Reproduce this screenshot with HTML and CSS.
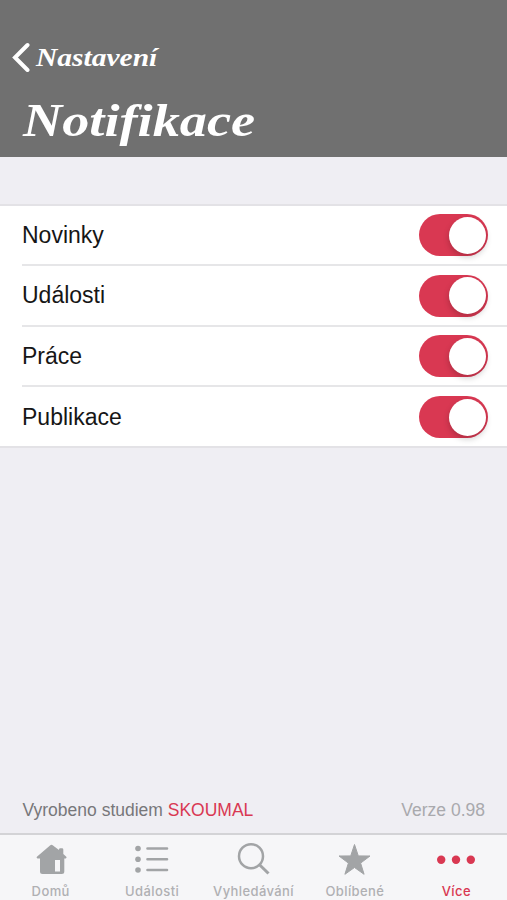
FILE: index.html
```html
<!DOCTYPE html>
<html lang="cs">
<head>
  <meta charset="UTF-8">
  <title>Notifikace</title>
  <meta name="viewport" content="width=device-width, initial-scale=1">
  <link rel="stylesheet" href="styles.css">
</head>
<body>
  <header class="header">
    <a class="back">
      <svg width="18" height="30" viewBox="0 0 18 30"><path d="M15.500 3L3 15.500l12.500 12.500" fill="none" stroke="#fff" stroke-width="4" stroke-linecap="round"/></svg>
      <span class="back-label">Nastavení</span>
    </a>
    <h1><span class="title">Notifikace</span></h1>
  </header>

  <main>
    <div class="list">
      <label class="row"><span>Novinky</span><input type="checkbox" class="switch" checked></label>
      <label class="row"><span>Události</span><input type="checkbox" class="switch" checked></label>
      <label class="row"><span>Práce</span><input type="checkbox" class="switch" checked></label>
      <label class="row"><span>Publikace</span><input type="checkbox" class="switch" checked></label>
    </div>
    <div class="info">
      <span>Vyrobeno studiem <a class="studio">SKOUMAL</a></span>
      <span class="version">Verze 0.98</span>
    </div>
  </main>

  <nav class="tabs">
    <a class="tab">
      <svg width="40" height="36" viewBox="0 0 40 36"><path fill-rule="evenodd" d="M19 4.500q1.500-1.300 3 0L28 9V8.500q0-1.300 1.300-1.300h1.700q1.300 0 1.300 1.300V13l3 2.800q.8 1.300-.5 1.700h-1.500V30.500q0 2.500-2.500 2.500H11.500Q9 33 9 30.500V17.500H6.500q-1.500-.4-.6-1.700zM24 19V30.500H29V19z"/></svg>
      <span>Domů</span>
    </a>
    <a class="tab">
      <svg width="40" height="36" viewBox="0 0 40 36"><circle cx="6" cy="7.500" r="2.800"/><circle cx="6" cy="18.300" r="2.800"/><circle cx="6" cy="29" r="2.800"/><path class="line" stroke-width="2.600" stroke-linecap="round" d="M15.500 7.500h19.500M15.500 18.300h19.500M15.500 29h19.500"/></svg>
      <span>Události</span>
    </a>
    <a class="tab">
      <svg width="40" height="36" viewBox="0 0 40 36"><circle class="line" cx="17" cy="15.200" r="12" stroke-width="2.500"/><path class="line" stroke-width="3" d="M25.500 23.700L34.500 32.500"/></svg>
      <span>Vyhledávání</span>
    </a>
    <a class="tab">
      <svg width="40" height="36" viewBox="0 0 40 36"><path stroke="#a2a4a6" stroke-linejoin="round" d="M19.500 3.500l3.800 11.400 11.700.1-9.400 7.100 3.500 11.200-9.600-6.800-9.600 6.800 3.500-11.200L4 15l11.700-.1z"/></svg>
      <span>Oblíbené</span>
    </a>
    <a class="tab active">
      <svg width="40" height="36" viewBox="0 0 40 36"><circle cx="5.200" cy="18.800" r="4.200"/><circle cx="20" cy="18.800" r="4.200"/><circle cx="34.800" cy="18.800" r="4.200"/></svg>
      <span>Více</span>
    </a>
  </nav>
</body>
</html>
```
FILE: styles.css
```css
* {
  box-sizing: border-box;
}
body {
  margin: 0;
  height: 900px;
  display: flex;
  flex-direction: column;
  overflow: hidden;
  background: #efeef3;
  color: #161616;
  font-family: "Liberation Sans", Arial, sans-serif;
}
.header {
  height: 157px;
  padding: 42px 12px 0;
  background: #707070;
  color: #fff;
  font-family: Georgia, "Liberation Serif", serif;
  font-weight: bold;
  font-style: italic;
}
.back {
  display: flex;
  align-items: center;
  gap: 6px;
  height: 30px;
  font-size: 25px;
}
.back-label,
.title {
  display: inline-block;
  transform: scaleX(1.18);
  transform-origin: left;
}
.back-label {
  padding-top: 2px;
}
h1 {
  margin: 23px 0 0 11px;
  font-size: 46px;
  line-height: 52px;
}
main {
  flex: 1;
  display: flex;
  flex-direction: column;
  justify-content: space-between;
  padding-top: 47px;
}
.list {
  background: #fff;
  border-top: 2px solid #e3e2e6;
  border-bottom: 2px solid #e3e2e6;
  padding-left: 22px;
}
.row {
  display: flex;
  align-items: center;
  justify-content: space-between;
  height: 60.500px;
  padding: 1px 19px 0 0;
  border-bottom: 2px solid #e6e6e8;
  font-size: 23px;
}
.row:first-child {
  height: 60px;
  padding-top: 0;
}
.row:last-child {
  border-bottom: 0;
  height: 59px;
}
.switch {
  appearance: none;
  width: 69px;
  height: 42px;
  margin: 0;
  padding: 2.500px;
  border-radius: 21px;
  background: #d93852;
}
.switch::before {
  content: "";
  display: block;
  width: 37px;
  height: 37px;
  margin-left: auto;
  border-radius: 50%;
  background: #fff;
  box-shadow: 0 3px 6px rgba(0, 0, 0, .2);
}
.info {
  display: flex;
  justify-content: space-between;
  padding: 0 22px 12px 22.500px;
  font-size: 17.500px;
  line-height: 21px;
  color: #77777a;
}
.studio {
  color: #d93852;
}
.version {
  color: #a9a9ad;
}
.tabs {
  display: flex;
  height: 67px;
  border-top: 2px solid #d3d3d6;
  background: #f6f6f8;
}
.tab {
  flex: 1;
  display: flex;
  flex-direction: column;
  align-items: center;
  padding-top: 6px;
  color: #b0b0b3;
  fill: #a2a4a6;
  font-family: Inter, sans-serif;
  font-size: 13px;
  font-weight: 500;
  line-height: 16px;
  letter-spacing: .4px;
}
.tab span {
  margin-top: 6px;
}
.line {
  fill: none;
  stroke: #a2a4a6;
}
.active {
  color: #d93852;
  fill: #d93852;
}
```
